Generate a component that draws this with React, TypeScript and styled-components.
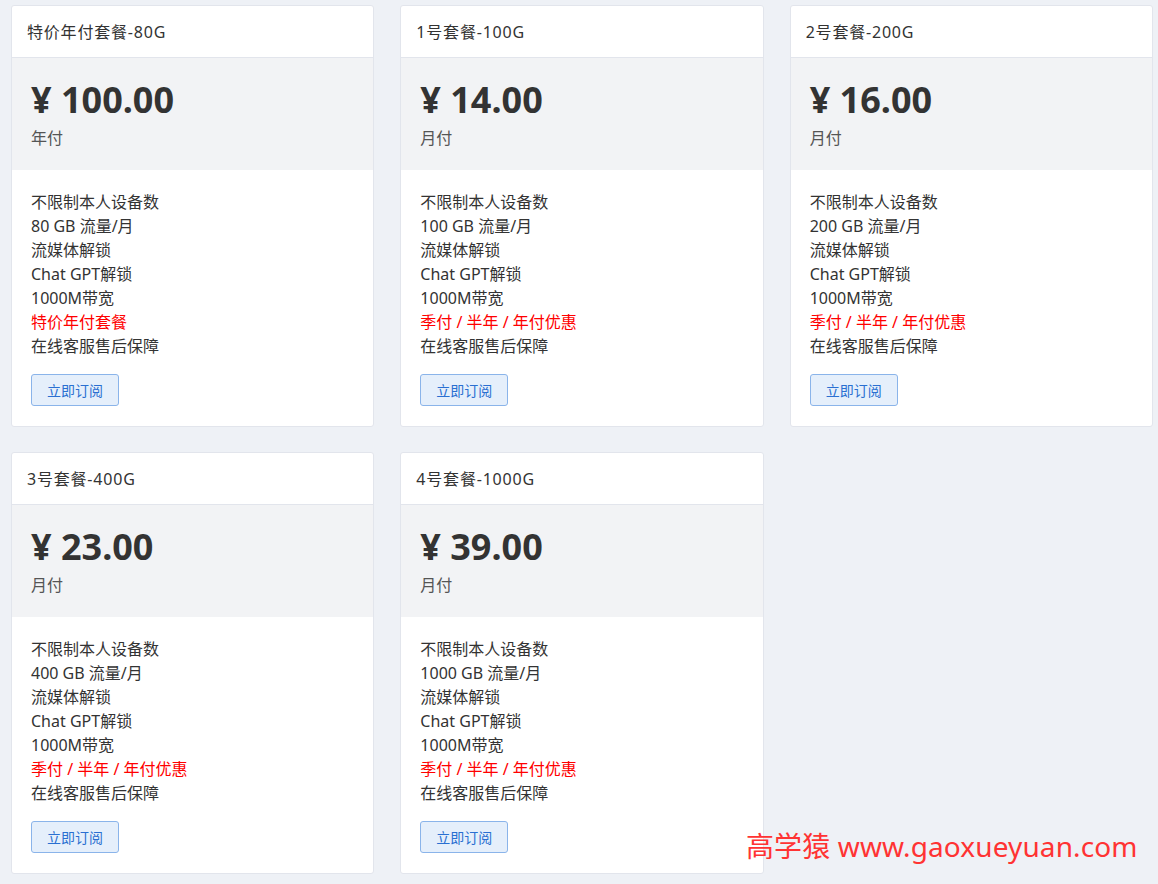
import styled, { createGlobalStyle } from 'styled-components';

const GlobalStyle = createGlobalStyle`
  html, body {
    margin: 0;
    padding: 0;
    background: #eef1f6;
  }
  body {
    font-family: "Noto Sans", "Noto Sans CJK SC", sans-serif;
    color: #333;
  }
`;

type Plan = {
  name: string,
  price: string,
  period: string,
  traffic: string,
  promo: string,
};

const plans: Plan[] = [
  { name: '特价年付套餐-80G', price: '100.00', period: '年付', traffic: '80 GB 流量/月', promo: '特价年付套餐' },
  { name: '1号套餐-100G', price: '14.00', period: '月付', traffic: '100 GB 流量/月', promo: '季付 / 半年 / 年付优惠' },
  { name: '2号套餐-200G', price: '16.00', period: '月付', traffic: '200 GB 流量/月', promo: '季付 / 半年 / 年付优惠' },
  { name: '3号套餐-400G', price: '23.00', period: '月付', traffic: '400 GB 流量/月', promo: '季付 / 半年 / 年付优惠' },
  { name: '4号套餐-1000G', price: '39.00', period: '月付', traffic: '1000 GB 流量/月', promo: '季付 / 半年 / 年付优惠' },
];

const Page = styled.div`
  position: relative;
  min-height: 884px;
  padding: 5px 5px 0 11px;
  box-sizing: border-box;
`;

const Grid = styled.div`
  display: grid;
  grid-template-columns: repeat(3, 1fr);
  column-gap: 26px;
  row-gap: 25px;
  align-items: start;
`;

const Card = styled.div`
  background: #fff;
  border: 1px solid #e2e5ec;
  border-radius: 3px;
  overflow: hidden;
`;

const Header = styled.div`
  height: 52px;
  box-sizing: border-box;
  display: flex;
  align-items: center;
  padding: 0 15px 2px;
  font-size: 16px;
  letter-spacing: 0.8px;
  color: #333;
  border-bottom: 1px solid #e2e5ec;
`;

const PriceBox = styled.div`
  background: #f2f3f5;
  height: 112px;
  padding: 18px 19px 0;
  box-sizing: border-box;
`;

const Price = styled.div`
  font-size: 36px;
  font-weight: 700;
  line-height: 48px;
  color: #333;
`;

const Period = styled.div`
  font-size: 16px;
  line-height: 24px;
  margin-top: 2px;
  color: #555;
`;

const Body = styled.div`
  padding: 20px 19px 20px;
`;

const Feature = styled.div<{ $red?: boolean }>`
  font-size: 16px;
  line-height: 24px;
  color: ${({ $red }) => ($red ? '#ff0000' : '#333')};
`;

const Subscribe = styled.button`
  display: block;
  margin-top: 16px;
  height: 32px;
  padding: 0 15px;
  background: #e5effb;
  border: 1px solid #8ab4ea;
  border-radius: 3px;
  color: #2a6fd1;
  font-family: inherit;
  font-size: 14px;
  cursor: pointer;
`;

const Watermark = styled.div`
  position: absolute;
  left: 746px;
  top: 826px;
  font-family: "Noto Sans", "Noto Sans CJK SC", sans-serif;
  font-size: 28px;
  letter-spacing: 0.12px;
  line-height: 40px;
  color: #ff3333;
  white-space: nowrap;
`;

function PlanCard({ plan }: { plan: Plan }) {
  return (
    <Card>
      <Header>{plan.name}</Header>
      <PriceBox>
        <Price>¥ {plan.price}</Price>
        <Period>{plan.period}</Period>
      </PriceBox>
      <Body>
        <Feature>不限制本人设备数</Feature>
        <Feature>{plan.traffic}</Feature>
        <Feature>流媒体解锁</Feature>
        <Feature>Chat GPT解锁</Feature>
        <Feature>1000M带宽</Feature>
        <Feature $red>{plan.promo}</Feature>
        <Feature>在线客服售后保障</Feature>
        <Subscribe>立即订阅</Subscribe>
      </Body>
    </Card>
  );
}

export default function App() {
  return (
    <Page>
      <GlobalStyle />
      <Grid>
        {plans.map((p) => (
          <PlanCard key={p.name} plan={p} />
        ))}
      </Grid>
      <Watermark>高学猿 www.gaoxueyuan.com</Watermark>
    </Page>
  );
}
